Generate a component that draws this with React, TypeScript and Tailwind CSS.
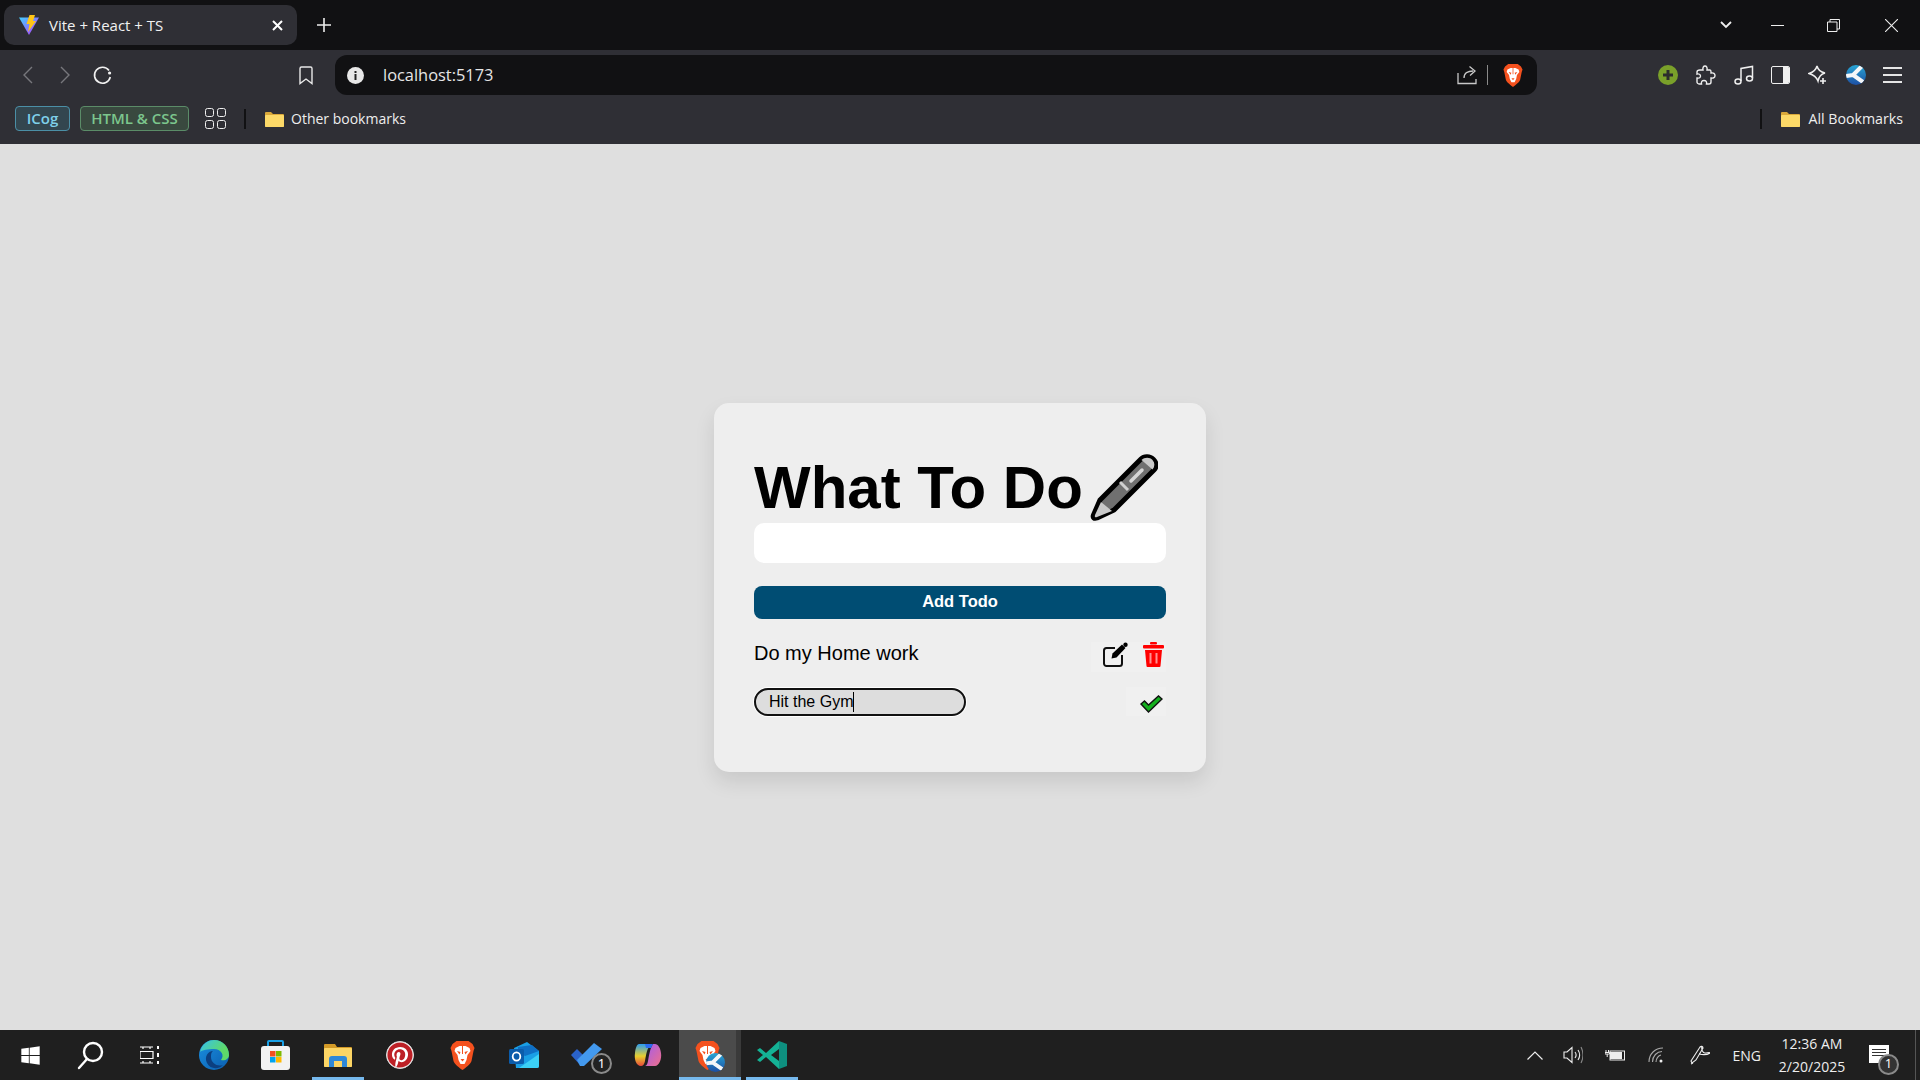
import { FaWindows, FaPinterest } from "react-icons/fa";
import { ReactNode } from "react";

const ui = "font-['Open_Sans','Noto_Sans',sans-serif]";

function ViteLogo({ size = 20 }: { size?: number }) {
  return (
    <svg width={size} height={size} viewBox="0 0 20 20">
      <defs>
        <linearGradient id="viteA" x1="0" y1="0" x2="1" y2="1">
          <stop offset="0" stopColor="#41d1ff" />
          <stop offset="1" stopColor="#bd34fe" />
        </linearGradient>
      </defs>
      <path d="M0 2.5 L20 2.5 L10 20 Z" fill="url(#viteA)" />
      <path d="M10.5 0 L16 0 L14 6 L17 6 L9 17 L10.5 9 L7.5 9 Z" fill="#ffc517" />
    </svg>
  );
}

function BraveIcon({ width = 20, height = 23 }: { width?: number; height?: number }) {
  return (
    <svg width={width} height={height} viewBox="0 0 24 29">
      <path d="M6 0 H18 L22 3 L24 7 L23 10 L21 20 C20 23 15 27 12 29 C9 27 4 23 3 20 L1 10 L0 7 L2 3 Z" fill="#f4511e" />
      <path d="M5 7 L9 5 H15 L19 7 L20 10 L17 14 L16 19 L14 23 H10 L8 19 L7 14 L4 10 Z" fill="#fff" />
      <path d="M6.5 10 L10 11 L9 13.5 Z M17.5 10 L14 11 L15 13.5 Z M10 18 H14 L12 20.5 Z" fill="#f4511e" />
      <path d="M12 5 V13" stroke="#f4511e" strokeWidth="1" />
    </svg>
  );
}

function KLogo({ size = 20 }: { size?: number }) {
  return (
    <svg width={size} height={size} viewBox="0 0 20 20">
      <defs>
        <linearGradient id="kLogoG" x1="0" y1="0" x2="0" y2="1">
          <stop offset="0" stopColor="#27a5d4" />
          <stop offset="1" stopColor="#1d4fa3" />
        </linearGradient>
        <clipPath id="kLogoC">
          <circle cx="10" cy="10" r="10" />
        </clipPath>
      </defs>
      <circle cx="10" cy="10" r="10" fill="url(#kLogoG)" />
      <path d="M16 1 L7 10 L17 17 M0 11 L7 10" fill="none" stroke="#f4f6f8" strokeWidth="4" clipPath="url(#kLogoC)" />
    </svg>
  );
}

function Folder() {
  return (
    <svg width="19" height="16" viewBox="0 0 19 16">
      <path d="M0 2 A1 1 0 0 1 1 1 H6 L8 3 H18 A1 1 0 0 1 19 4 V15 A1 1 0 0 1 18 16 H1 A1 1 0 0 1 0 15 Z" fill="#d9a83a" />
      <rect x="0" y="4" width="19" height="12" rx="1" fill="#fcd968" />
    </svg>
  );
}

function NavIcon({ children, w = 38 }: { children: ReactNode; w?: number }) {
  return (
    <span className="flex h-full shrink-0 items-center justify-center" style={{ width: w }}>
      {children}
    </span>
  );
}

function TabStrip() {
  return (
    <div className="flex h-[50px] items-center bg-[#111113] pl-1">
      <div className="flex h-[40px] w-[293px] items-center rounded-[10px] bg-[#2f2f35] pl-[15px] pr-[14px]">
        <ViteLogo />
        <span className={`ml-[10px] flex-1 text-[15px] text-[#f1f1f1] ${ui}`}>Vite + React + TS</span>
        <svg width="11" height="11" viewBox="0 0 11 11" stroke="#fff" strokeWidth="2">
          <path d="M1 1 L10 10 M10 1 L1 10" />
        </svg>
      </div>
      <span className="ml-[17px] flex w-[20px] items-center justify-center">
        <svg width="14" height="14" viewBox="0 0 14 14" stroke="#eee" strokeWidth="1.6">
          <path d="M7 0 V14 M0 7 H14" />
        </svg>
      </span>
      <div className="flex-1" />
      <div className="flex items-center">
        <svg width="12" height="8" viewBox="0 0 12 8" fill="none" stroke="#eee" strokeWidth="1.8">
          <path d="M1 1 L6 6 L11 1" />
        </svg>
        <span className="ml-[39px] h-px w-[13px] bg-[#eee]" />
        <svg className="ml-[43px]" width="13" height="13" viewBox="0 0 13 13" fill="none" stroke="#eee" strokeWidth="1">
          <path d="M0.5 3 H10 V12.5 H0.5 Z M3 3 V0.5 H12.5 V10 H10" />
        </svg>
        <svg className="ml-[45px] mr-[22px]" width="13" height="13" viewBox="0 0 13 13" stroke="#eee" strokeWidth="1.1">
          <path d="M0 0 L13 13 M13 0 L0 13" />
        </svg>
      </div>
    </div>
  );
}

function Toolbar() {
  return (
    <div className="flex h-[50px] items-center bg-[#2f2f35] pl-[8px] pr-[9px]">
      <NavIcon>
        <svg width="11" height="18" viewBox="0 0 11 18" fill="none" stroke="#77777c" strokeWidth="1.4">
          <path d="M10 1 L2 9 L10 17" />
        </svg>
      </NavIcon>
      <NavIcon>
        <svg width="11" height="18" viewBox="0 0 11 18" fill="none" stroke="#77777c" strokeWidth="1.4">
          <path d="M1 1 L9 9 L1 17" />
        </svg>
      </NavIcon>
      <NavIcon w={36}>
        <svg width="19" height="19" viewBox="0 0 19 19" fill="none" stroke="#f0f0f0" strokeWidth="1.6">
          <path d="M16 4.5 A8 8 0 1 0 17.3 11" />
          <circle cx="16.6" cy="7" r="1.6" fill="#f0f0f0" stroke="none" />
        </svg>
      </NavIcon>
      <div className="w-[167px]" />
      <NavIcon w={37}>
        <svg width="14" height="19" viewBox="0 0 14 19" fill="none" stroke="#e8e8e8" strokeWidth="1.4">
          <path d="M1 2.5 A1.5 1.5 0 0 1 2.5 1 H11.5 A1.5 1.5 0 0 1 13 2.5 V17.5 L7 13 L1 17.5 Z" />
        </svg>
      </NavIcon>
      <div className="ml-[11px] flex h-[40px] w-[1202px] items-center rounded-[12px] bg-[#111113] pl-[12px] pr-[14px]">
        <svg width="17" height="17" viewBox="0 0 17 17">
          <circle cx="8.5" cy="8.5" r="8.5" fill="#e8e8e8" />
          <rect x="7.5" y="7" width="2" height="6" fill="#222" />
          <rect x="7.5" y="4" width="2" height="2" fill="#222" />
        </svg>
        <span className={`ml-[19px] flex-1 text-[16.4px] text-[#e6e6e6] ${ui}`}>localhost:5173</span>
        <svg width="20" height="20" viewBox="0 0 20 20" fill="none" stroke="#c8c8c8" strokeWidth="1.3">
          <path d="M1 8 V18.5 H19 V14 M7 13 C7 8 11 6 16 6 M12.5 1.5 L18 6 L13 10.5" />
        </svg>
        <span className="ml-[10px] h-[20px] w-px bg-[#8a8a8a]" />
        <span className="ml-[15px] flex">
          <BraveIcon />
        </span>
      </div>
      <div className="flex h-full flex-1 items-center justify-end">
        <NavIcon w={38}>
          <svg width="20" height="20" viewBox="0 0 20 20">
            <circle cx="10" cy="10" r="10" fill="#7aa02a" />
            <path d="M10 5 V15 M5 10 H15" stroke="#2c2c2c" strokeWidth="3" />
          </svg>
        </NavIcon>
        <NavIcon w={38}>
          <svg width="20" height="20" viewBox="0 0 20 20" fill="none" stroke="#efefef" strokeWidth="1.4">
            <path d="M4 5 H7 C6.5 2.5 7.5 1 9 1 C10.5 1 11.5 2.5 11 5 H14 C15 5 15 6 15 7 V8 C17.5 7.5 19 8.5 19 10.5 C19 12.5 17.5 13.5 15 13 V17 C15 18 14 19 13 19 H10.5 C11 16.5 10 15.5 8 15.5 C6 15.5 5 16.5 5.5 19 H3 C2 19 1 18 1 17 V13 C3.5 13.5 4.5 12.5 4.5 11 C4.5 9.5 3 8.5 1 9 V7 C1 6 2 5 4 5 Z" />
          </svg>
        </NavIcon>
        <NavIcon w={37}>
          <svg width="20" height="20" viewBox="0 0 20 20" fill="none" stroke="#efefef" strokeWidth="1.5">
            <ellipse cx="4" cy="16.5" rx="3" ry="2.5" />
            <ellipse cx="15.5" cy="13.5" rx="3" ry="2.5" />
            <path d="M7 16 V3.5 L18.5 1.5 V13" />
          </svg>
        </NavIcon>
        <NavIcon w={37}>
          <span className="flex h-[18px] w-[19px] overflow-hidden rounded-[2px] border-[1.5px] border-[#efefef]">
            <span className="flex-1" />
            <span className="w-[6px] bg-[#efefef]" />
          </span>
        </NavIcon>
        <NavIcon w={38}>
          <svg width="20" height="20" viewBox="0 0 20 20" fill="none" stroke="#efefef" strokeWidth="1.5">
            <path d="M9 1 C10 5 12.5 7 17 8 C13 9 11 11 10 16 C8.5 12 6 10 1 8.5 C5.5 7 8 5 9 1 Z" />
            <path d="M15 13 V19 M12 16 H18" strokeWidth="1.6" />
          </svg>
        </NavIcon>
        <NavIcon w={37}>
          <KLogo />
        </NavIcon>
        <NavIcon w={37}>
          <span className="flex w-[19px] flex-col gap-[5px]">
            <span className="h-[2px] bg-[#e5e5e5]" />
            <span className="h-[2px] bg-[#e5e5e5]" />
            <span className="h-[2px] bg-[#e5e5e5]" />
          </span>
        </NavIcon>
      </div>
    </div>
  );
}

function BookmarksBar() {
  return (
    <div className={`flex h-[44px] items-center bg-[#2f2f35] pb-[7px] pl-[15px] pr-[17px] text-[14px] text-[#eeeeee] ${ui}`}>
      <span className="flex h-[25px] w-[55px] items-center justify-center rounded-[4px] border border-[#4b8fa6] bg-[#33464f] text-[15px] font-semibold text-[#7fd0ea]">
        ICog
      </span>
      <span className="ml-[10px] flex h-[25px] w-[109px] items-center justify-center rounded-[4px] border border-[#5b8c68] bg-[#39493f] text-[15px] font-semibold text-[#7cc68d]">
        HTML &amp; CSS
      </span>
      <span className="ml-[16px] grid grid-cols-2 gap-[3px]">
        <span className="size-[9px] rounded-[2.5px] border-[1.5px] border-[#eee]" />
        <span className="size-[9px] rounded-[2.5px] border-[1.5px] border-[#eee]" />
        <span className="size-[9px] rounded-[2.5px] border-[1.5px] border-[#eee]" />
        <span className="size-[9px] rounded-[2.5px] border-[1.5px] border-[#eee]" />
      </span>
      <span className="ml-[18px] h-[20px] w-[2px] bg-[#111113]" />
      <span className="ml-[19px] flex">
        <Folder />
      </span>
      <span className="ml-[7px]">Other bookmarks</span>
      <div className="flex-1" />
      <span className="h-[20px] w-[2px] bg-[#111113]" />
      <span className="ml-[19px] flex">
        <Folder />
      </span>
      <span className="ml-[8px] text-[14.2px]">All Bookmarks</span>
    </div>
  );
}

function PenEmoji() {
  return (
    <svg width="68" height="68" viewBox="0 0 68 68" className="ml-[7px] shrink-0">
      <path d="M10 46 L51 5 C54 2 60 2 63.5 5.5 C67 9 67 13 64 16 L24 56 L7 64 C4 65 2.5 63.5 3.5 61 Z" fill="#707070" stroke="#000" strokeWidth="5" strokeLinejoin="round" />
      <path d="M11 48 L22 57 L7 63 C5 63.5 4.5 63 5 61 Z" fill="#c9c9c9" />
      <path d="M51.5 6 C54.5 3 60 3 62.5 6 C65 9 65 12.5 62.5 15.5 Z" fill="#c9c9c9" />
      <path d="M30 28 L38 36" stroke="#d0d0d0" strokeWidth="3" />
      <path d="M41 27 L52 16" stroke="#d5d5d5" strokeWidth="3.5" strokeLinecap="round" />
    </svg>
  );
}

function EditIcon() {
  return (
    <svg width="25" height="25" viewBox="0 0 25 25">
      <path d="M12 6 H3.5 A2.5 2.5 0 0 0 1 8.5 V21.5 A2.5 2.5 0 0 0 3.5 24 H16.5 A2.5 2.5 0 0 0 19 21.5 V13" fill="none" stroke="#111" strokeWidth="2" />
      <path d="M8.5 16.5 L9.5 11.5 L19 2.5 L22.5 6 L13.5 15.5 Z" fill="#000" />
      <circle cx="22.5" cy="2.8" r="2.2" fill="#000" />
    </svg>
  );
}

function TrashIcon() {
  return (
    <svg width="21" height="25" viewBox="0 0 21 25">
      <rect x="7" y="0" width="7" height="2.5" rx="1" fill="#ff0000" />
      <rect x="0" y="3" width="21" height="3.5" rx="1" fill="#ff0000" />
      <path d="M2 8 H19 L17.5 24 A1 1 0 0 1 16.5 25 H4.5 A1 1 0 0 1 3.5 24 Z" fill="#ff0000" />
      <rect x="6.5" y="11" width="2" height="10.5" fill="#ff9090" />
      <rect x="12.5" y="11" width="2" height="10.5" fill="#ff9090" />
    </svg>
  );
}

function Card() {
  return (
    <div className="w-[492px] rounded-[15px] bg-[#eeeeee] px-[40px] pb-[56px] pt-[50px] font-['Liberation_Sans',sans-serif] shadow-[0_10px_20px_rgba(0,0,0,0.1)]">
      <div className="flex h-[70px] items-center text-[60px] leading-none font-bold text-black">
        <span>What To Do</span>
        <PenEmoji />
      </div>
      <input readOnly className="block h-[40px] w-full rounded-[10px] bg-white outline-none" />
      <button className="mt-[23px] block h-[33px] w-full rounded-[8px] bg-[#004d73] pb-px text-[16.5px] font-bold text-white">
        Add Todo
      </button>
      <div className="mt-[23px] flex h-[30px] items-start justify-between">
        <span className="text-[20px] leading-[23px] text-black">Do my Home work</span>
        <div className="flex h-[30px] w-[75px] items-start gap-[15px] bg-[#f0f0f0] pl-[12px]">
          <EditIcon />
          <TrashIcon />
        </div>
      </div>
      <div className="mt-[15px] flex h-[29px] items-center justify-between">
        <div className="flex h-[28px] w-[212px] items-center self-end rounded-full border-2 border-[#111] bg-[#dddddd] pl-[13px] text-[16px] text-black shadow-[0_0_0_1px_#fff]">
          Hit the Gym
          <span className="h-[20px] w-px bg-black" />
        </div>
        <div className="flex h-[29px] w-[40px] items-start justify-end bg-[#f0f0f0] pr-[3px] pt-[8px]">
          <svg width="23" height="18" viewBox="0 0 23 18">
            <path d="M1 9 L4.5 6 L8.5 10 L18.5 1 L22 4 L8.5 17 Z" fill="#14b01e" stroke="#111" strokeWidth="1.4" strokeLinejoin="miter" />
          </svg>
        </div>
      </div>
    </div>
  );
}

function Badge({ className }: { className: string }) {
  return (
    <span className={`absolute flex size-[21px] items-center justify-center rounded-full border-2 border-[#8a8a8a] bg-[#222] text-[13px] text-white ${className}`}>
      1
    </span>
  );
}

function TaskCell({ children, line, active }: { children: ReactNode; line?: boolean; active?: boolean }) {
  return (
    <span className={`relative flex h-full w-[62px] items-center justify-center ${active ? "bg-[#4b4b4b]" : ""}`}>
      {children}
      {line && <span className="absolute inset-x-[5px] bottom-0 h-[3px] bg-[#76b9ed]" />}
    </span>
  );
}

function Taskbar() {
  return (
    <div className="flex h-[50px] items-center bg-[#1f1f1f]">
      <span className="flex h-full w-[60px] items-center justify-center">
        <FaWindows size={21} color="#fff" />
      </span>
      <span className="flex h-full w-[60px] items-center justify-center">
        <svg width="30" height="30" viewBox="0 0 30 30" fill="none" stroke="#fff" strokeWidth="2.4">
          <circle cx="18" cy="12" r="9" />
          <path d="M12 19 L4 28" strokeLinecap="round" />
        </svg>
      </span>
      <span className="flex h-full w-[60px] items-center justify-center">
        <svg width="20" height="18" viewBox="0 0 20 18" fill="none" stroke="#fff" strokeWidth="1.2">
          <path d="M0 1 H13 M0 5.5 H13 V12.5 H0 Z M0 17 H13 M3 1 V3 M10 1 V3 M3 15 V17 M10 15 V17" />
          <path d="M18 0 V3 M18 7 V11 M18 15 V18" strokeWidth="2" />
        </svg>
      </span>
      <div className="ml-[3px] flex h-full items-center">
        <TaskCell>
          <svg width="30" height="30" viewBox="0 0 30 30">
            <defs>
              <linearGradient id="edgeG" x1="0" y1="0" x2="1" y2="0.6">
                <stop offset="0" stopColor="#35c1f1" />
                <stop offset="0.8" stopColor="#5ed96a" />
              </linearGradient>
              <linearGradient id="edgeB" x1="0" y1="0" x2="1" y2="1">
                <stop offset="0" stopColor="#1a8fe0" />
                <stop offset="1" stopColor="#0b5eaf" />
              </linearGradient>
            </defs>
            <circle cx="15" cy="15" r="15" fill="url(#edgeB)" />
            <path d="M1 12 C3 3 10 0 15 0 C24 0 30 7 30 15 C30 19 26 21 22 20 C26 15 22 9 15 9 C9 9 3 10 1 12 Z" fill="url(#edgeG)" />
            <path d="M12 17 C12 23 18 27 24 25 C19 30 11 29 8 23 C5 17 9 11 14 11 C12 12.5 12 15 12 17 Z" fill="#0c3f80" />
          </svg>
        </TaskCell>
        <TaskCell>
          <svg className="mr-[2px]" width="29" height="30" viewBox="0 0 29 30">
            <path d="M7 7 V2 A1 1 0 0 1 8 1 H21 A1 1 0 0 1 22 2 V7" fill="none" stroke="#19a0e6" strokeWidth="2" />
            <rect x="0" y="6" width="29" height="24" rx="3" fill="#f2f2f2" />
            <rect x="9" y="11" width="5.5" height="5.5" fill="#f25022" />
            <rect x="15" y="11" width="5.5" height="5.5" fill="#7fba00" />
            <rect x="9" y="17" width="5.5" height="5.5" fill="#00a4ef" />
            <rect x="15" y="17" width="5.5" height="5.5" fill="#ffb900" />
          </svg>
        </TaskCell>
        <TaskCell line>
          <svg width="28" height="23" viewBox="0 0 28 23">
            <path d="M0 1 A1 1 0 0 1 1 0 H11 L13 3 H27 A1 1 0 0 1 28 4 V22 A1 1 0 0 1 27 23 H1 A1 1 0 0 1 0 22 Z" fill="#d39a27" />
            <rect x="0" y="4" width="28" height="19" rx="1" fill="#fcd565" />
            <path d="M5 23 V15 A3 3 0 0 1 8 12 H20 A3 3 0 0 1 23 15 V23 H18 V17 H10 V23 Z" fill="#2f88d8" />
          </svg>
        </TaskCell>
        <TaskCell>
          <span className="flex size-[28px] items-center justify-center rounded-full border border-[#ddd] bg-white">
            <FaPinterest size={26} color="#bd2026" />
          </span>
        </TaskCell>
        <TaskCell>
          <BraveIcon width={25} height={29} />
        </TaskCell>
        <TaskCell>
          <svg width="30" height="26" viewBox="0 0 30 26">
            <path d="M5 6 L18 0 L30 9 V24 A2 2 0 0 1 28 26 H7 Z" fill="#1a9fe6" />
            <path d="M9 5 L23 3 L30 9 L16 14 L9 10 Z" fill="#0f6fc4" />
            <path d="M10 26 L30 12 V24 A2 2 0 0 1 28 26 Z" fill="#3bd0f5" />
            <rect x="0" y="7" width="15" height="15" rx="1.5" fill="#0b5cab" />
            <ellipse cx="7.5" cy="14.5" rx="3.8" ry="4.2" fill="none" stroke="#fff" strokeWidth="1.8" />
          </svg>
        </TaskCell>
        <TaskCell>
          <svg className="mt-[-2px]" width="31" height="23" viewBox="0 0 31 23">
            <path d="M0 12 L6 6 L14 14 L10 23 Z" fill="#2a62c9" />
            <path d="M6 17 L23 0 L31 6 L13 23 A3 3 0 0 1 9 23 Z" fill="#4399ee" />
          </svg>
          <Badge className="bottom-[6px] right-[5px]" />
        </TaskCell>
        <TaskCell>
          <svg width="28" height="24" viewBox="0 0 28 24">
            <defs>
              <linearGradient id="copL" x1="0" y1="0" x2="0" y2="1">
                <stop offset="0" stopColor="#2a9cf0" />
                <stop offset="0.55" stopColor="#e8d02e" />
                <stop offset="1" stopColor="#e8483a" />
              </linearGradient>
              <linearGradient id="copR" x1="0" y1="0" x2="1" y2="1">
                <stop offset="0" stopColor="#a25cf0" />
                <stop offset="1" stopColor="#ee6f8a" />
              </linearGradient>
            </defs>
            <path d="M5 1 H17 C13 5 12 12 11 18 C10.5 21 9 23 7 23 C2 23 0 16 1 10 C1.5 5 3 1 5 1 Z" fill="url(#copL)" />
            <path d="M11 23 H21 C25 23 28 16 27 10 C26.5 5 24 1 21 1 H19 C16 5 15 13 14 18 C13.5 21 12.5 22.5 11 23 Z" fill="url(#copR)" />
            <path d="M11 1 H19 L17 5 H12 Z" fill="#2a6cf0" />
          </svg>
        </TaskCell>
        <span className="relative flex h-full w-[62px] bg-[#3a3a3a]">
          <span className="flex h-full w-[57px] items-center justify-center bg-[#4b4b4b]">
            <span className="relative flex">
              <BraveIcon width={25} height={29} />
              <span className="absolute bottom-[-2px] right-[-5px] flex">
                <KLogo size={19} />
              </span>
            </span>
          </span>
          <span className="absolute inset-x-0 bottom-0 h-[3px] bg-[#76b9ed]" />
        </span>
        <TaskCell line>
          <svg width="30" height="30" viewBox="0 0 30 30">
            <path d="M22 1 L30 4 V26 L22 29 Z" fill="#0e8f7f" />
            <path d="M22 1 L9 13 L3 8 L0 10 L6 15 L0 20 L3 22 L9 17 L22 29 V21 L14 15 L22 9 Z" fill="#14b295" />
          </svg>
        </TaskCell>
      </div>
      <div className="flex-1" />
      <div className={`flex h-full items-center text-[#eee] ${ui}`}>
        <svg width="16" height="9" viewBox="0 0 16 9" fill="none" stroke="#eee" strokeWidth="1.2">
          <path d="M0.5 8.5 L8 1 L15.5 8.5" />
        </svg>
        <svg className="ml-[20px]" width="20" height="18" viewBox="0 0 20 18" fill="none" stroke="#eee" strokeWidth="1.1">
          <path d="M1 6 H4 L9 1.5 V16.5 L4 12 H1 Z M12 6 C13.5 8 13.5 10 12 12 M15 4 C17 7 17 11 15 14" />
          <path d="M18 1 C20.5 6 20.5 12 18 17" stroke="#888" />
        </svg>
        <svg className="ml-[22px]" width="20" height="12" viewBox="0 0 20 12">
          <rect x="5" y="2" width="14.5" height="9" fill="none" stroke="#eee" strokeWidth="1" />
          <rect x="5" y="3" width="12" height="7" fill="#eee" />
          <path d="M1 1 V3 M3.5 1 V3 M0 3.5 H4.5 V5 H0 Z M2.2 5 V8" stroke="#eee" strokeWidth="1" />
        </svg>
        <svg className="ml-[23px]" width="16" height="16" viewBox="0 0 16 16" fill="none" stroke="#aaa" strokeWidth="1.1">
          <path d="M1 15 C1 7 7 1 15 1 M4.5 15 C4.5 9 9 4.5 14 4.5 M8 15 C8 11.5 10.5 8.5 13 8" />
          <circle cx="13" cy="14" r="1.5" fill="#eee" stroke="none" />
        </svg>
        <svg className="ml-[26px]" width="20" height="20" viewBox="0 0 20 20" fill="none" stroke="#eee" strokeWidth="1.1">
          <path d="M2 18 L1 16 L10 2 C11 1 13 1 13 3 L6 15 Z M3 18 L1 19 M12 1 C11 5 13 8 15 8 C17 8 20 7 20 8 C17 10 13 10 9 9" />
        </svg>
        <span className="ml-[23px] text-[14px]">ENG</span>
        <div className="ml-[14px] flex w-[74px] flex-col items-center text-[14px] leading-[23px]">
          <span>12:36 AM</span>
          <span>2/20/2025</span>
        </div>
        <span className="relative ml-[20px] mr-[26px] mt-[-3px] flex h-[18px] w-[20px] flex-col gap-[2px] bg-white px-[3px] pt-[4px]">
          <span className="h-px bg-[#333]" />
          <span className="h-px bg-[#333]" />
          <span className="h-px bg-[#333]" />
          <Badge className="bottom-[-12px] right-[-10px] bg-[#333]" />
        </span>
        <span className="h-full w-px bg-[#555]" />
        <span className="w-[4px]" />
      </div>
    </div>
  );
}

export default function App() {
  return (
    <div className="flex h-screen w-screen flex-col overflow-hidden bg-[#dfdfdf]">
      <TabStrip />
      <Toolbar />
      <BookmarksBar />
      <main className="flex flex-1 items-center justify-center">
        <Card />
      </main>
      <Taskbar />
    </div>
  );
}
